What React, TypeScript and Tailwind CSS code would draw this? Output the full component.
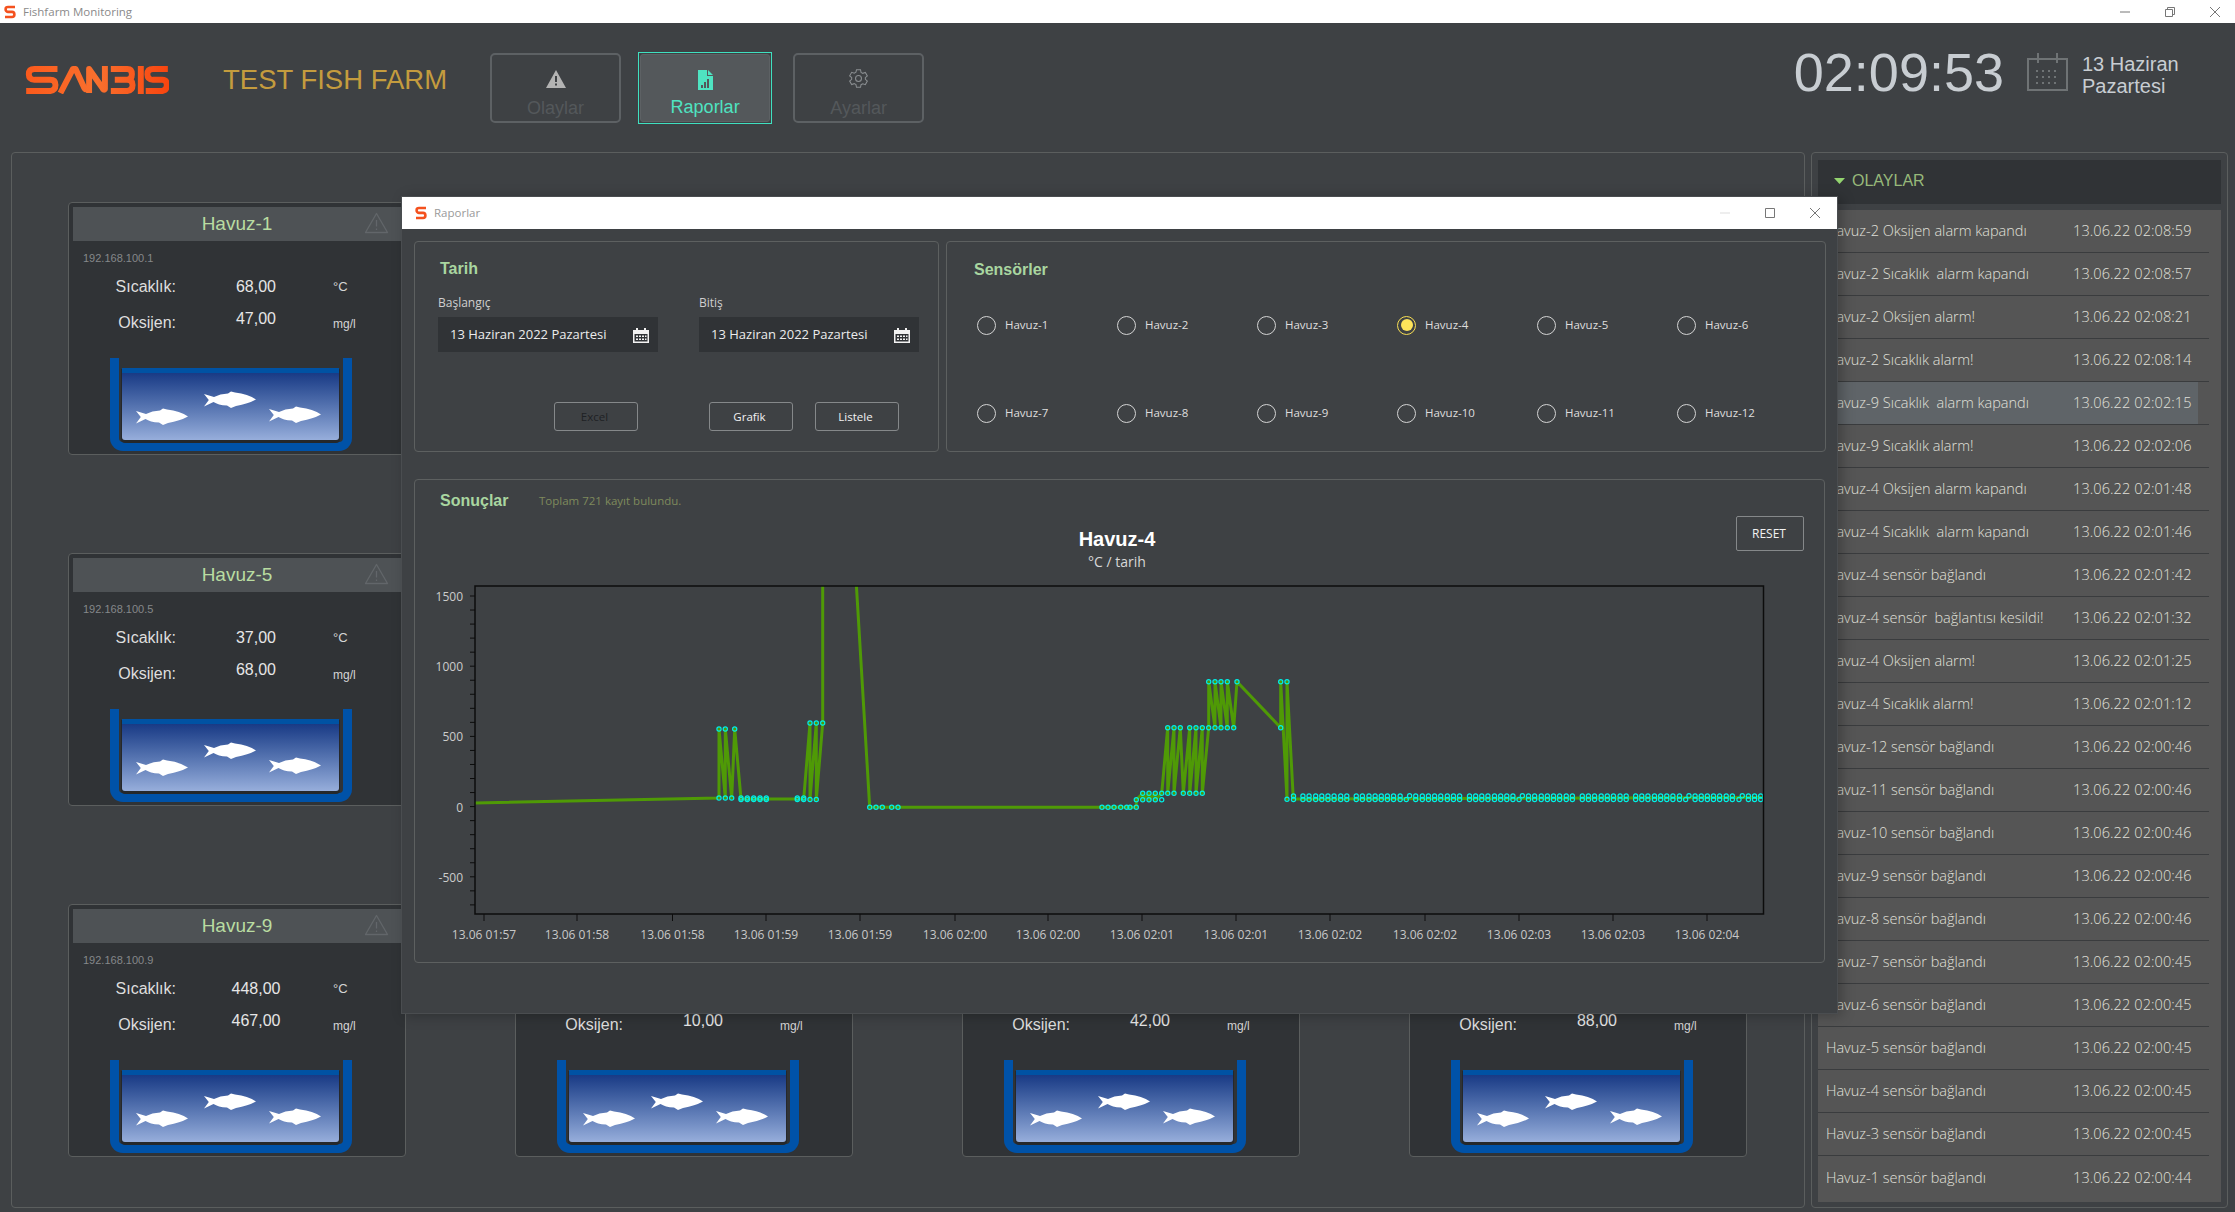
import React from 'react';

const EVENTS: [string, string][] = [
  ['Havuz-2 Oksijen alarm kapandı', '02:08:59'],
  ['Havuz-2 Sıcaklık  alarm kapandı', '02:08:57'],
  ['Havuz-2 Oksijen alarm!', '02:08:21'],
  ['Havuz-2 Sıcaklık alarm!', '02:08:14'],
  ['Havuz-9 Sıcaklık  alarm kapandı', '02:02:15'],
  ['Havuz-9 Sıcaklık alarm!', '02:02:06'],
  ['Havuz-4 Oksijen alarm kapandı', '02:01:48'],
  ['Havuz-4 Sıcaklık  alarm kapandı', '02:01:46'],
  ['Havuz-4 sensör bağlandı', '02:01:42'],
  ['Havuz-4 sensör  bağlantısı kesildi!', '02:01:32'],
  ['Havuz-4 Oksijen alarm!', '02:01:25'],
  ['Havuz-4 Sıcaklık alarm!', '02:01:12'],
  ['Havuz-12 sensör bağlandı', '02:00:46'],
  ['Havuz-11 sensör bağlandı', '02:00:46'],
  ['Havuz-10 sensör bağlandı', '02:00:46'],
  ['Havuz-9 sensör bağlandı', '02:00:46'],
  ['Havuz-8 sensör bağlandı', '02:00:46'],
  ['Havuz-7 sensör bağlandı', '02:00:45'],
  ['Havuz-6 sensör bağlandı', '02:00:45'],
  ['Havuz-5 sensör bağlandı', '02:00:45'],
  ['Havuz-4 sensör bağlandı', '02:00:45'],
  ['Havuz-3 sensör bağlandı', '02:00:45'],
  ['Havuz-1 sensör bağlandı', '02:00:44'],
];

// cards 2-4 and 6-8 sit fully behind the report window, 10-12 show only their lower half
const PONDS = [
  { name: 'Havuz-1', temp: '68,00', oxy: '47,00' },
  null,
  null,
  null,
  { name: 'Havuz-5', temp: '37,00', oxy: '68,00' },
  null,
  null,
  null,
  { name: 'Havuz-9', temp: '448,00', oxy: '467,00' },
  { name: 'Havuz-10', oxy: '10,00' },
  { name: 'Havuz-11', oxy: '42,00' },
  { name: 'Havuz-12', oxy: '88,00' },
];

// chart data, in page pixels
const HI1 = 730;
const TOP1 = 724;
const ZERO = 808.3;
const M2 = 800.7;
const L3 = 794.3;
const H3 = 728.7;
const T3 = 682.7;

const FLAT_DOUBLE = [
  410, 430, 443, 457, 470, 483, 496, 510, 523, 543, 556, 570, 583, 596, 609, 622, 636, 669, 683, 696, 709, 722, 736, 749, 762,
  783, 796, 809, 822, 836, 849, 862, 875, 908, 921, 935, 948, 961, 974, 988, 1001, 1022, 1035, 1048, 1062, 1075, 1088, 1102,
  1115, 1135, 1148, 1161, 1175, 1188, 1201, 1214, 1228, 1261, 1274, 1287, 1300, 1313, 1327, 1340, 1374, 1387, 1400,
].map(v => 1100 + v / 2.119);
const FLAT_LOW = [649, 888, 1241, 1354].map(v => 1100 + v / 2.119);
const FLAT_HIGH = [656, 895, 1248, 1361].map(v => 1100 + v / 2.119);

const LINE: [number, number][] = [
  [475, 804], [719, 799], [719, HI1], [725.3, 799], [725.3, HI1], [731.7, 799], [734.7, HI1],
  [741, 800], [747.3, 800], [753.7, 800], [760, 800], [766.3, 800], [797.3, 800], [803.7, 800],
  [810, TOP1], [810, 800.5], [816.3, TOP1], [816.3, 800.5], [822.7, TOP1], [822.7, 400], [845.2, 400],
  [869.7, ZERO], [876, ZERO], [882.3, ZERO], [891.7, ZERO], [898, ZERO], [1102, ZERO], [1108, ZERO], [1114, ZERO],
  [1120.7, ZERO], [1126.7, ZERO], [1130, ZERO], [1136.3, ZERO], [1136.3, M2], [1142.7, L3], [1142.7, M2], [1149, L3],
  [1149, M2], [1155.3, L3], [1155.3, M2], [1161.7, L3], [1167.7, H3], [1167.7, L3], [1174, H3], [1174, L3], [1180.3, H3],
  [1183.3, L3], [1189.7, H3], [1189.7, L3], [1196, H3], [1196, L3], [1202.3, H3], [1202.3, L3], [1208.7, H3], [1208.7, T3],
  [1215, H3], [1215, T3], [1221, H3], [1221, T3], [1227.3, H3], [1227.3, T3], [1233.7, H3], [1237, T3], [1280.7, H3],
  [1280.7, T3], [1287, 800.3], [1287, T3], [1293.3, 800], [1763, 798.5],
];

const MARKERS: [number, number][] = [
  ...[719, 725.3, 731.7].map((x): [number, number] => [x, 799]),
  ...[719, 725.3, 734.7].map((x): [number, number] => [x, HI1]),
  ...[741, 747.3, 753.7, 760, 766.3, 797.3, 803.7].flatMap((x): [number, number][] => [[x, 799], [x, 800.6]]),
  ...[810, 816.3].map((x): [number, number] => [x, 800.5]),
  ...[810, 816.3, 822.7].map((x): [number, number] => [x, TOP1]),
  ...[869.7, 876, 882.3, 891.7, 898, 1102, 1108, 1114, 1120.7, 1126.7, 1130, 1136.3].map((x): [number, number] => [x, ZERO]),
  ...[1136.3, 1142.7, 1149, 1155.3, 1161.7].map((x): [number, number] => [x, M2]),
  ...[1142.7, 1149, 1155.3, 1161.7, 1167.7, 1174, 1183.3, 1189.7, 1196, 1202.3].map((x): [number, number] => [x, L3]),
  ...[1167.7, 1174, 1180.3, 1189.7, 1196, 1202.3, 1208.7, 1215, 1221, 1227.3, 1233.7, 1280.7].map((x): [number, number] => [x, H3]),
  ...[1208.7, 1215, 1221, 1227.3, 1237, 1280.7, 1287].map((x): [number, number] => [x, T3]),
  [1287, 800.3],
  ...FLAT_DOUBLE.flatMap((x): [number, number][] => [[x, 797], [x, 800.5]]),
  ...FLAT_LOW.map((x): [number, number] => [x, 800.5]),
  ...FLAT_HIGH.map((x): [number, number] => [x, 796.7]),
];

const X_TICKS: [number, string][] = [
  [484, '13.06 01:57'], [577, '13.06 01:58'], [672.5, '13.06 01:58'], [766, '13.06 01:59'], [860, '13.06 01:59'],
  [955, '13.06 02:00'], [1048, '13.06 02:00'], [1142, '13.06 02:01'], [1236, '13.06 02:01'], [1330, '13.06 02:02'],
  [1425, '13.06 02:02'], [1519, '13.06 02:03'], [1613, '13.06 02:03'], [1707, '13.06 02:04'],
];
const Y_LABELS: [number, string][] = [[597, '1500'], [667, '1000'], [737, '500'], [808, '0'], [878, '-500']];
const Y_TICKS = Array.from({ length: 23 }, (_, i) => 597 + i * 14.04);

function SIcon({ className }: { className: string }) {
  return (
    <svg viewBox="0 0 12 14" className={className} fill="none">
      <path d="M11 2H4Q1.6 2 1.6 4.2T4 6.9H8Q10.4 6.9 10.4 9.4T8 12H1" stroke="#f4511e" strokeWidth="2.6" />
    </svg>
  );
}

function Logo() {
  return (
    <svg viewBox="0 0 432 85" className="w-[144px] h-[28px] mt-[43px] ml-[25px]" fill="none" role="img" aria-label="SANBIS">
      <defs>
        <linearGradient id="logoFill" gradientUnits="userSpaceOnUse" x1="0" x2="432" y1="0" y2="0">
          <stop offset="0" stopColor="#fb5a1c" />
          <stop offset="0.5" stopColor="#f9702e" />
          <stop offset="1" stopColor="#f8450f" />
        </linearGradient>
      </defs>
      <g stroke="url(#logoFill)" strokeWidth="18" strokeLinejoin="round">
        <path d="M96 9H26Q9 9 9 25T26 42H74Q90 42 90 58T74 76H1" />
        <path d="M105 82 143 9H151L176 64Q183 78 192 64" />
        <path d="M192 82V9L232 66Q236 76 240 70V0" />
        <path d="M258 9H308Q322 9 322 25T308 42H270M308 42Q324 42 324 58T308 76H258" />
        <path d="M349 0V85" />
        <path d="M431 9H386Q369 9 369 25T386 42H414Q428 42 428 58T414 76H364" />
      </g>
    </svg>
  );
}

function WindowControls({ restore, faint }: { restore?: boolean; faint?: boolean }) {
  return (
    <div className="flex items-center gap-[35px]">
      <svg viewBox="0 0 10 10" className="w-[10px] h-[10px]">
        <path d="M0 5H10" stroke={faint ? '#dddddd' : '#777777'} strokeWidth="1" />
      </svg>
      <svg viewBox="0 0 10 10" className="w-[10px] h-[10px]" fill="none" stroke="#777777" strokeWidth="1">
        {restore ? <path d="M.5 2.5H7.5V9.5H.5ZM2.5 2.5V.5H9.5V7.5H7.5" /> : <path d="M.5 .5H9.5V9.5H.5Z" />}
      </svg>
      <svg viewBox="0 0 10 10" className="w-[10px] h-[10px]" fill="none" stroke="#777777" strokeWidth="1">
        <path d="M0 0 10 10M10 0 0 10" />
      </svg>
    </div>
  );
}

function NavButton({ label, icon, active }: { label: string; icon: React.ReactNode; active?: boolean }) {
  if (active) {
    return (
      <div className="w-[134px] h-[72px] border border-[#3fe0c0] p-px">
        <div className="w-full h-full rounded-[3px] bg-[#54585b] border border-[#5d6164] flex flex-col items-center pt-[15px]">
          {icon}
          <span className="mt-[7px] text-[18px] leading-[20px] text-[#4fe3c1]">{label}</span>
        </div>
      </div>
    );
  }
  return (
    <div className="w-[131px] h-[70px] rounded-[5px] border-2 border-[#5d6164] flex flex-col items-center pt-[13px]">
      <div className="h-[21px] flex items-center">{icon}</div>
      <span className="mt-[9px] text-[18px] leading-[20px] text-[#54585b]">{label}</span>
    </div>
  );
}

function Fish({ className }: { className: string }) {
  return (
    <svg viewBox="0 0 52 17" className={`absolute w-[52px] h-[17px] ${className}`} fill="#ffffff">
      <path d="M0 3 10 6Q16 3 24 2.6L27 0.4 31 1.6Q44 3 52 8.6 44 13 32 15L27 17 23 14.6Q14 14 9.5 11L0 15.6 4.8 9Z" />
    </svg>
  );
}

function Pond() {
  return (
    <div className="relative ml-[37px] mt-[25px] w-[242px] h-[93px] border-x-[9px] border-b-[9px] border-[#0052a8] rounded-b-[13px] pt-[10px] px-[3px]">
      <div className="w-[217px] h-[72px] rounded-b-[3px] flex flex-col overflow-hidden shadow-[0_2px_0_1px_#25282b]">
        <div className="h-[5px] bg-[#0052a3]" />
        <div className="flex-1 bg-gradient-to-b from-[#193a85] to-[#97aedb]" />
      </div>
      <Fish className="left-[85px] top-[33px]" />
      <Fish className="left-[17px] top-[50px]" />
      <Fish className="left-[150px] top-[48px]" />
    </div>
  );
}

function PondCard({ name, index, temp, oxy }: { name: string; index: number; temp?: string; oxy: string }) {
  // temp is left out for the cards whose upper half the report window hides
  return (
    <div className="w-[338px] h-[253px] rounded-[4px] border border-[#5b5e5e] bg-[#303336] p-[4px]">
      <div className="relative h-[34px] bg-[#4e5255] flex items-center justify-center text-[19px] text-[#b9dca1]">
        {temp && name}
        <svg viewBox="0 0 24 22" className="absolute right-[12px] top-[5px] w-[25px] h-[22px]" fill="none" stroke="#62666a" strokeWidth="1.3" strokeLinejoin="round">
          <path d="M12 1.5 23 20.5H1ZM12 8V14.5M12 16.5V18" />
        </svg>
      </div>
      <div className="ml-[10px] mt-[9px] h-[16px] text-[11px] leading-[16px] text-[#85888a]">{temp && `192.168.100.${index}`}</div>
      <div className="mt-[11px] h-[20px] flex items-center text-[16px] text-[#dedede]">
        {temp && (
          <>
            <span className="w-[103px] text-right">Sıcaklık:</span>
            <span className="ml-[50px] w-[60px] text-center text-[#e6e6e6]">{temp}</span>
            <span className="ml-[47px] text-[13px] text-[#d5d5d5]">°C</span>
          </>
        )}
      </div>
      <div className="mt-[16px] h-[20px] flex items-center text-[16px] text-[#dedede]">
        <span className="w-[103px] text-right">Oksijen:</span>
        <span className="ml-[50px] w-[60px] text-center text-[#e6e6e6] pb-[8px]">{oxy}</span>
        <span className="ml-[47px] text-[12px] text-[#d5d5d5] pt-[2px]">mg/l</span>
      </div>
      <Pond />
    </div>
  );
}

function SmallCalendar() {
  return (
    <svg viewBox="0 0 16 16" className="w-[16px] h-[16px]" fill="#f2f2f2">
      <path d="M3 1h2v2h6V1h2v2h3v13H0V3h3Zm-1.5 6v7.5h13V7Z" />
      <path d="M3 8.5h2v1.6H3zM6 8.5h2v1.6H6zM9 8.5h2v1.6H9zM12 8.5h1.5v1.6H12zM3 11.5h2v1.6H3zM6 11.5h2v1.6H6zM9 11.5h2v1.6H9zM12 11.5h1.5v1.6H12z" />
    </svg>
  );
}

function DateField({ label }: { label: string }) {
  return (
    <div className="w-[220px]">
      <div className="h-[16px] text-[12px] leading-[16px] text-[#cfcfcf] font-['Open_Sans',sans-serif]">{label}</div>
      <div className="mt-[6px] h-[35px] bg-[#303336] flex items-center justify-between pl-[12px] pr-[9px] text-[13px] text-[#ececec] font-['Open_Sans',sans-serif]">
        <span>13 Haziran 2022 Pazartesi</span>
        <SmallCalendar />
      </div>
    </div>
  );
}

function FlatButton({ label, className }: { label: string; className: string }) {
  return (
    <div className={`h-[29px] rounded-[3px] border border-[#85888a] flex items-center justify-center pr-[3px] text-[11.5px] font-['Open_Sans',sans-serif] ${className}`}>
      {label}
    </div>
  );
}

function Radio({ label, checked }: { label: string; checked?: boolean }) {
  return (
    <div className="w-[140px] h-[20px] flex items-center gap-[9px]">
      {checked ? (
        <span className="w-[19px] h-[19px] rounded-full border-[1.5px] border-[#f7de55] flex items-center justify-center">
          <span className="w-[12px] h-[12px] rounded-full bg-[#fde45a]" />
        </span>
      ) : (
        <span className="w-[19px] h-[19px] rounded-full border-[1.5px] border-[#d4d4d4]" />
      )}
      <span className="text-[11.5px] text-[#dedede] font-['Open_Sans',sans-serif]">{label}</span>
    </div>
  );
}

function Chart() {
  return (
    <svg viewBox="415 580 1409 382" className="w-[1409px] h-[382px] font-['Open_Sans',sans-serif]">
      <defs>
        <clipPath id="plotArea">
          <rect x="475" y="587" width="1288.5" height="328" />
        </clipPath>
      </defs>
      <g clipPath="url(#plotArea)">
        <polyline points={LINE.map(p => p.join(',')).join(' ')} fill="none" stroke="#4f9a06" strokeWidth="3" strokeLinejoin="round" />
        {MARKERS.map(([x, y], i) => (
          <circle key={i} cx={x} cy={y} r="2.1" fill="none" stroke="#00f0e6" strokeWidth="1.2" />
        ))}
      </g>
      <rect x="475" y="587" width="1288.5" height="328" fill="none" stroke="#0c0c0c" strokeWidth="1.5" />
      {Y_TICKS.map(y => (
        <line key={y} x1="470" x2="475" y1={y} y2={y} stroke="#0c0c0c" strokeWidth="1" />
      ))}
      {Y_LABELS.map(([y, t]) => (
        <text key={t} x="463" y={y + 4.5} textAnchor="end" className="text-[12px] fill-[#cccccc]">{t}</text>
      ))}
      {X_TICKS.map(([x, t]) => (
        <g key={x}>
          <line x1={x} x2={x} y1="915" y2="922" stroke="#0c0c0c" strokeWidth="1" />
          <text x={x} y="940" textAnchor="middle" className="text-[12px] fill-[#c8c8c8]">{t}</text>
        </g>
      ))}
    </svg>
  );
}

function ReportsWindow() {
  return (
    <div className="absolute left-[401px] top-[196px] w-[1437px] h-[818px] bg-[#3e4144] border border-[#4a4d50] shadow-[4px_2px_12px_rgba(0,0,0,0.25)] flex flex-col">
      <div className="h-[32px] bg-white flex items-center justify-between pl-[13px] pr-[17px]">
        <div className="flex items-center gap-[7px]">
          <SIcon className="w-[12px] h-[14px]" />
          <span className="text-[11.5px] text-[#9a9a9a] font-['Open_Sans',sans-serif]">Raporlar</span>
        </div>
        <WindowControls faint />
      </div>
      <div className="flex gap-[7px] pl-[12px] pt-[12px]">
        <div className="w-[525px] h-[211px] rounded-[4px] border border-[#5d6060] pt-[17px] pl-[23px]">
          <div className="pl-[2px] h-[20px] text-[16px] leading-[20px] font-bold text-[#a9d6a0]">Tarih</div>
          <div className="mt-[16px] flex gap-[41px]">
            <DateField label="Başlangıç" />
            <DateField label="Bitiş" />
          </div>
          <div className="mt-[50px] flex ml-[116px]">
            <FlatButton label="Excel" className="w-[84px] text-[#1f2225]" />
            <FlatButton label="Grafik" className="w-[84px] ml-[71px] text-[#f2f2f2]" />
            <FlatButton label="Listele" className="w-[84px] ml-[22px] text-[#f2f2f2]" />
          </div>
        </div>
        <div className="w-[880px] h-[211px] rounded-[4px] border border-[#5d6060] pt-[18px] pl-[30px]">
          <div className="-ml-[3px] h-[20px] text-[16px] leading-[20px] font-bold text-[#a9d6a0]">Sensörler</div>
          <div className="mt-[35px] grid grid-cols-[repeat(6,140px)] gap-y-[68px]">
            {Array.from({ length: 12 }, (_, i) => (
              <Radio key={i} label={`Havuz-${i + 1}`} checked={i === 3} />
            ))}
          </div>
        </div>
      </div>
      <div className="relative ml-[12px] mt-[27px] w-[1411px] h-[484px] rounded-[4px] border border-[#5d6060]">
        <div className="h-[99px] flex flex-col">
          <div className="flex items-center h-[44px] pl-[25px] pb-[2px]">
            <span className="w-[99px] text-[16px] font-bold text-[#a9d6a0]">Sonuçlar</span>
            <span className="text-[11.5px] text-[#7f8a5c] font-['Open_Sans',sans-serif]">Toplam 721 kayıt bulundu.</span>
          </div>
          <div className="mt-[3px] pr-[5px] h-[24px] text-center text-[20px] leading-[24px] font-bold text-white">Havuz-4</div>
          <div className="mt-[2px] pr-[5px] h-[18px] text-center text-[14px] leading-[18px] text-[#d8d8d8] font-['Open_Sans',sans-serif]">°C / tarih</div>
        </div>
        <div className="absolute left-[1321px] top-[36px] w-[68px] h-[35px] rounded-[2px] border border-[#85888a] flex items-center justify-center pr-[2px] text-[12px] text-[#f2f2f2] font-['Open_Sans',sans-serif]">
          RESET
        </div>
        <Chart />
      </div>
    </div>
  );
}

export default function App() {
  return (
    <div className="relative w-[2235px] h-[1212px] overflow-hidden bg-[#3e4144] flex flex-col font-['Liberation_Sans',Arial,sans-serif]">
      <div className="h-[23px] bg-white flex items-center justify-between pl-[4px] pr-[15px]">
        <div className="flex items-center gap-[7px]">
          <SIcon className="w-[12px] h-[14px]" />
          <span className="text-[11.5px] text-[#8a8a8a] font-['Open_Sans',sans-serif]">Fishfarm Monitoring</span>
        </div>
        <WindowControls restore />
      </div>

      <div className="h-[129px] flex items-start">
        <Logo />
        <div className="ml-[54px] mt-[41px] text-[27.5px] leading-[32px] text-[#c49c3e]">TEST FISH FARM</div>
        <div className="ml-[43px] mt-[29px] flex items-center">
          <NavButton
            label="Olaylar"
            icon={
              <svg viewBox="0 0 20 18" className="w-[20px] h-[18px]">
                <path fillRule="evenodd" fill="#b3b3b3" d="M10 0 20 18H0ZM9 6V12H11V6ZM9 13.5V15.5H11V13.5Z" />
              </svg>
            }
          />
          <div className="ml-[17px]">
            <NavButton
              active
              label="Raporlar"
              icon={
                <svg viewBox="0 0 15 20" className="w-[15px] h-[20px]">
                  <path fillRule="evenodd" fill="#4fe3c1" d="M0 0H9V6H15V20H0ZM10 0 15 5H10ZM3 15V18H5V15ZM6 12V18H8V12ZM9 9V18H11V9Z" />
                </svg>
              }
            />
          </div>
          <div className="ml-[21px]">
            <NavButton
              label="Ayarlar"
              icon={
                <svg viewBox="0 0 24 24" className="w-[21px] h-[21px]" fill="none" stroke="#8a8e91" strokeWidth="1.2">
                  <path d="M9.7 2h4.6l.6 3 2 1.1 2.9-1 2.3 4-2.3 2 .1 1.9 2.2 2-2.3 4-2.9-1-2 1.1-.6 2.9H9.7l-.6-3-2-1.1-2.9 1-2.3-4 2.3-2v-2l-2.3-2 2.3-4 2.9 1 2-1.1Z" />
                  <circle cx="12" cy="12" r="3.4" />
                </svg>
              }
            />
          </div>
        </div>
        <div className="ml-auto mt-[22px] flex items-start text-[#c8cdd2]">
          <div className="text-[54px] leading-[54px]">02:09:53</div>
          <svg viewBox="0 0 41 38" className="ml-[23px] mt-[8px] w-[41px] h-[38px]" fill="none" stroke="#6f7375" strokeWidth="2">
            <path d="M1 6H40V37H1ZM11 0V10M30 0V10" />
            <path d="M9 18h3M15 18h3M21 18h3M27 18h3M9 24h3M15 24h3M21 24h3M27 24h3M9 30h3M15 30h3M21 30h3M27 30h3" strokeDasharray="2 1" />
          </svg>
          <div className="ml-[14px] mt-[8px] w-[153px] text-[20px] leading-[22px]">
            13 Haziran
            <br />
            Pazartesi
          </div>
        </div>
      </div>

      <div className="flex-1 flex gap-[6px] pl-[11px] pr-[7px] pb-[4px]">
        <div className="w-[1794px] rounded-[4px] border border-[#5b5e5e] pl-[56px] pt-[49px]">
          <div className="grid grid-cols-[repeat(4,338px)] gap-x-[109px] gap-y-[98px]">
            {PONDS.map((p, i) =>
              p ? (
                <PondCard key={p.name} name={p.name} index={i + 1} temp={p.temp} oxy={p.oxy} />
              ) : (
                <div key={i} className="h-[253px]" />
              ),
            )}
          </div>
        </div>
        <div className="flex-1 rounded-[4px] border border-[#5b5e5e] pt-[7px] px-[6px] pb-[5px] flex flex-col">
          <div className="h-[44px] shrink-0 bg-[#303336] flex items-center pl-[16px] pb-[2px] gap-[7px]">
            <svg viewBox="0 0 11 6" className="w-[11px] h-[6px]">
              <path d="M0 0H11L5.5 6Z" fill="#93d46f" />
            </svg>
            <span className="text-[16px] text-[#97b97a]">OLAYLAR</span>
          </div>
          <div className="mt-[6px] flex-1 bg-[#555555] pr-[12px] font-['Open_Sans',sans-serif] font-light text-[14.5px] text-[#e0e0da]">
            {EVENTS.map(([text, time], i) => (
              <div key={i} className={`h-[43px] ${i < EVENTS.length - 1 ? 'border-b border-[#3a3c3e]' : ''}`}>
                <div className={`h-full w-[380px] flex items-center pl-[8px] ${i === 4 ? 'bg-[#5f6468]' : ''}`}>
                  <span className="w-[247px] whitespace-pre">{text}</span>
                  <span className="tracking-[0.1px]">13.06.22 {time}</span>
                </div>
              </div>
            ))}
          </div>
        </div>
      </div>

      <ReportsWindow />
    </div>
  );
}
